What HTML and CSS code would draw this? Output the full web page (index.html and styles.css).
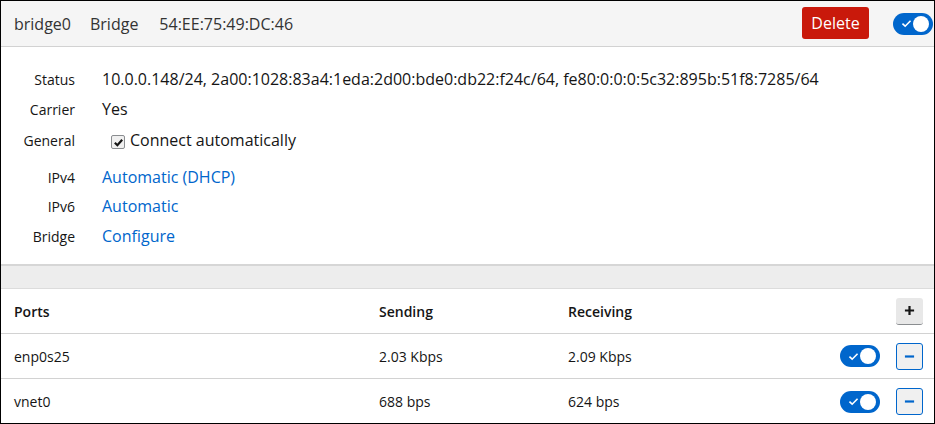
FILE: index.html
```html
<!DOCTYPE html>
<html>
<head>
<meta charset="utf-8">
<link rel="stylesheet" href="styles.css">
</head>
<body>
<div class="frame">
  <header class="head">
    <div class="head-info">
      <span class="h-name">bridge0</span>
      <span class="h-type">Bridge</span>
      <span>54:EE:75:49:DC:46</span>
    </div>
    <div class="head-actions">
      <button class="btn-delete">Delete</button>
      <span class="toggle">
        <svg class="tick" viewBox="0 0 12 10" width="11" height="9"><path d="M1.5 5.2 L4.5 8 L10.5 2" fill="none" stroke="#fff" stroke-width="1.8"/></svg>
        <span class="knob"></span>
      </span>
    </div>
  </header>
  <section class="details">
    <div class="row r1"><div class="lbl">Status</div><div class="val">10.0.0.148/24, 2a00:1028:83a4:1eda:2d00:bde0:db22:f24c/64, fe80:0:0:0:5c32:895b:51f8:7285/64</div></div>
    <div class="row r2"><div class="lbl">Carrier</div><div class="val">Yes</div></div>
    <div class="row r3"><div class="lbl">General</div><div class="val check-val"><span class="checkbox"><svg viewBox="0 0 12 12" width="11" height="11"><path d="M2 6.2 L4.8 9 L10 3" fill="none" stroke="#151515" stroke-width="2.4"/></svg></span>Connect automatically</div></div>
    <div class="row r4"><div class="lbl">IPv4</div><div class="val link">Automatic (DHCP)</div></div>
    <div class="row r5"><div class="lbl">IPv6</div><div class="val link">Automatic</div></div>
    <div class="row r6"><div class="lbl">Bridge</div><div class="val link">Configure</div></div>
  </section>
  <div class="band"></div>
  <section class="ports">
    <div class="prow phead">
      <div class="c-name">Ports</div>
      <div class="c-send">Sending</div>
      <div class="c-recv">Receiving</div>
      <div class="c-act"><button class="btn-sq btn-plus"><svg viewBox="0 0 12 12" width="11" height="11"><path d="M6 1 V11 M1 6 H11" stroke="#151515" stroke-width="2.4"/></svg></button></div>
    </div>
    <div class="prow">
      <div class="c-name">enp0s25</div>
      <div class="c-send">2.03 Kbps</div>
      <div class="c-recv">2.09 Kbps</div>
      <div class="c-act">
        <span class="toggle"><svg class="tick" viewBox="0 0 12 10" width="11" height="9"><path d="M1.5 5.2 L4.5 8 L10.5 2" fill="none" stroke="#fff" stroke-width="1.8"/></svg><span class="knob"></span></span>
        <button class="btn-sq btn-minus"><svg viewBox="0 0 12 12" width="11" height="11"><path d="M1 6 H11" stroke="#0066cc" stroke-width="2.4"/></svg></button>
      </div>
    </div>
    <div class="prow">
      <div class="c-name">vnet0</div>
      <div class="c-send">688 bps</div>
      <div class="c-recv">624 bps</div>
      <div class="c-act">
        <span class="toggle"><svg class="tick" viewBox="0 0 12 10" width="11" height="9"><path d="M1.5 5.2 L4.5 8 L10.5 2" fill="none" stroke="#fff" stroke-width="1.8"/></svg><span class="knob"></span></span>
        <button class="btn-sq btn-minus"><svg viewBox="0 0 12 12" width="11" height="11"><path d="M1 6 H11" stroke="#0066cc" stroke-width="2.4"/></svg></button>
      </div>
    </div>
  </section>
</div>
</body>
</html>
```
FILE: styles.css
```css
* { box-sizing: border-box; }
html, body { margin: 0; padding: 0; }
body {
  font-family: "Open Sans", "Liberation Sans", sans-serif;
  color: #151515;
  background: #fff;
}
.frame {
  width: 935px;
  height: 424px;
  border: 1px solid #000;
  overflow: hidden;
  display: flex;
  flex-direction: column;
}
.head {
  height: 46px;
  flex: none;
  background: #f5f5f5;
  border-bottom: 1px solid #d2d2d2;
  display: flex;
  align-items: center;
  justify-content: space-between;
  padding: 0 1px 0 13px;
}
.head-info {
  display: flex;
  font-size: 16px;
  color: #333;
}
.h-name { margin-right: 19px; }
.h-type { margin-right: 21px; }
.head-actions {
  display: flex;
  align-items: center;
  gap: 24px;
}
.btn-delete {
  font-family: inherit;
  font-size: 16px;
  color: #fff;
  background: #c9190b;
  border: none;
  border-radius: 3px;
  width: 67px;
  height: 32px;
  padding: 0;
  margin-top: -1px;
}
.toggle {
  position: relative;
  display: inline-flex;
  align-items: center;
  width: 40px;
  height: 22px;
  border-radius: 11px;
  background: #0066cc;
  flex: none;
}
.toggle .tick { margin-left: 8px; }
.toggle .knob {
  position: absolute;
  right: 4px;
  top: 3px;
  width: 16px;
  height: 16px;
  border-radius: 50%;
  background: #fff;
}
.details {
  flex: none;
  padding-top: 21px;
  height: 217px;
}
.row {
  display: flex;
  align-items: baseline;
  height: 31px;
}
.r1 { height: 30px; }
.r3 { height: 37px; }
.r4 { height: 29px; }
.r5 { height: 30px; }
.lbl {
  width: 74px;
  text-align: right;
  font-size: 14px;
  color: #151515;
}
.val {
  margin-left: 27px;
  font-size: 16px;
}
.link { color: #0066cc; }
.check-val {
  margin-left: 36px;
  display: flex;
  align-items: center;
}
.checkbox {
  width: 14px;
  height: 14px;
  border: 1px solid #8a8d90;
  border-radius: 2px;
  background: #f0f0f0;
  display: inline-flex;
  align-items: center;
  justify-content: center;
  margin-right: 5px;
  position: relative;
  top: 2px;
}
.band {
  flex: none;
  height: 25px;
  background: #ededed;
  border-top: 2px solid #d6d6d6;
  border-bottom: 1px solid #dcdcdc;
}
.ports { flex: 1; }
.prow {
  height: 45px;
  display: flex;
  align-items: center;
  padding: 0 11px 0 13px;
  font-size: 14px;
  border-bottom: 1px solid #d2d2d2;
}
.prow:last-child { border-bottom: none; }
.phead {
  font-weight: 600;
  font-size: 14px;
}
.c-name { width: 365px; }
.c-send { width: 189px; }
.c-recv { flex: 1; }
.c-act {
  display: flex;
  align-items: center;
  gap: 16px;
}
.btn-sq {
  width: 27px;
  height: 27px;
  padding: 0;
  display: inline-flex;
  align-items: center;
  justify-content: center;
  border-radius: 3px;
  background: #f0f0f0;
}
.btn-plus {
  border: none;
  border-bottom: 1px solid #8a8d90;
  background: #e8e8e8;
}
.btn-minus {
  border: 1px solid #0066cc;
}
```
